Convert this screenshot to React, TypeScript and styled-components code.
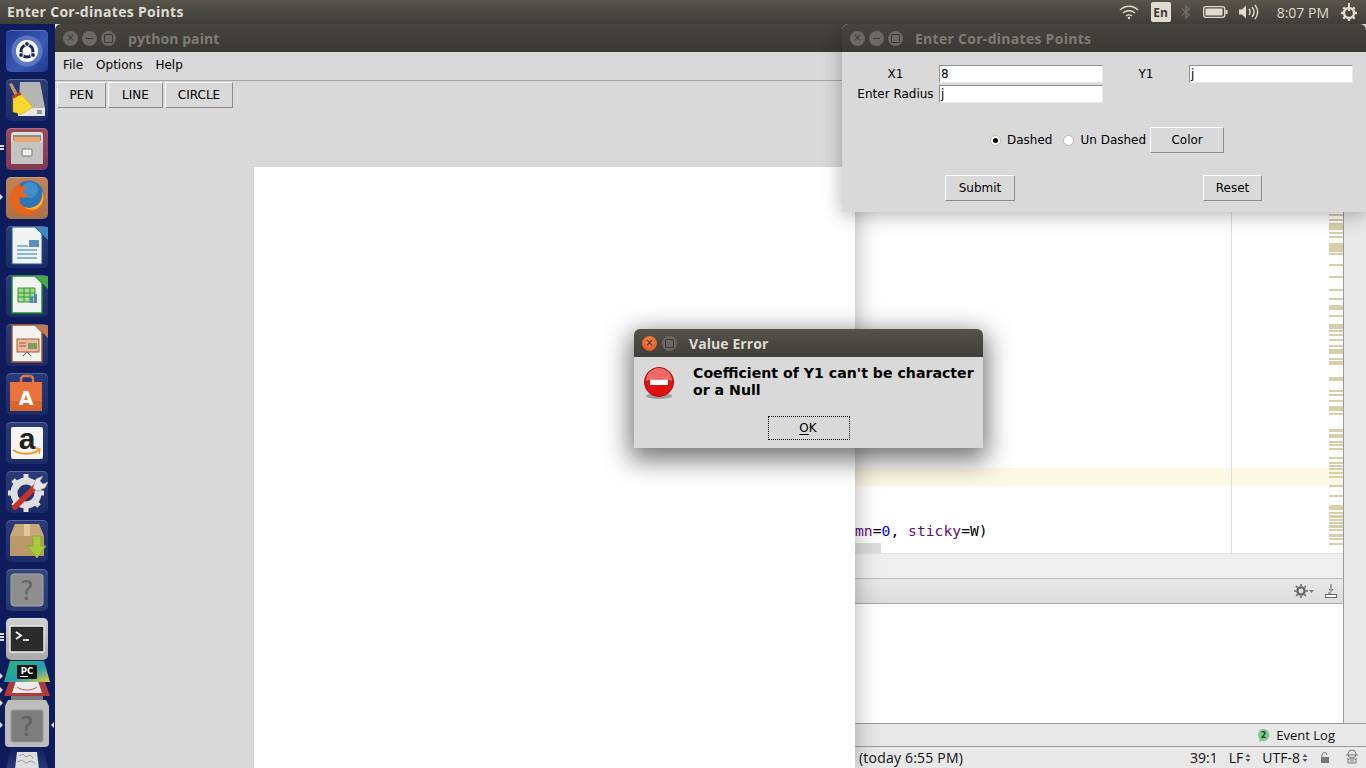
import React from 'react';
import styled, { createGlobalStyle, css } from 'styled-components';

const UI_FONT = '"DejaVu Sans", sans-serif';
const TITLE_FONT = '"Open Sans", "Noto Sans", sans-serif';

const GUTTER_MARKS: [number, number][] = [
  [214, 2], [219, 2], [223, 7], [232, 2], [236, 2], [243, 9], [253, 2], [264, 2], [276, 2], [289, 2],
  [298, 2], [305, 5], [315, 2], [324, 5], [330, 2], [334, 2], [339, 2], [345, 2], [349, 5], [358, 2],
  [361, 4], [377, 4], [390, 2], [394, 2], [400, 2], [406, 5], [413, 2], [429, 3], [434, 4], [441, 2],
  [444, 2], [448, 2], [457, 2], [462, 2], [465, 2], [468, 2], [472, 2], [476, 2], [485, 2], [495, 2],
  [505, 5], [512, 2], [515, 3], [519, 2], [522, 2], [525, 3], [529, 2], [534, 3], [538, 2], [543, 2],
];

const GlobalStyle = createGlobalStyle`
  html, body { margin: 0; padding: 0; overflow: hidden; background: #fff; }
  * { box-sizing: border-box; }
`;

const Desktop = styled.div`
  position: relative;
  width: 1366px;
  height: 768px;
  overflow: hidden;
  font-family: ${UI_FONT};
  background: #fff;
`;

const TopBar = styled.header`
  position: absolute;
  inset: 0 0 auto 0;
  height: 24px;
  z-index: 10;
  display: flex;
  align-items: center;
  padding: 0 8px 0 7px;
  background: linear-gradient(#57554c, #3e3d38);
  color: #dfdbd2;
`;

const TopTitle = styled.span`
  flex: 1;
  margin-top: -1px;
  font: 700 14px ${TITLE_FONT};
  letter-spacing: 0.3px;
`;

const Indicators = styled.div`
  display: flex;
  align-items: center;
`;

const LangBadge = styled.span`
  width: 20px;
  height: 20px;
  margin: 0 10px 0 12px;
  border-radius: 2px;
  background: #dfdbd2;
  color: #3c3b37;
  font: 700 12px ${TITLE_FONT};
  display: flex;
  align-items: center;
  justify-content: center;
`;

const Clock = styled.span`
  margin: 0 11px 0 18px;
  font: 400 14px ${TITLE_FONT};
`;

const Launcher = styled.nav`
  position: absolute;
  left: 0;
  top: 24px;
  bottom: 0;
  width: 55px;
  z-index: 9;
  display: flex;
  flex-direction: column;
  gap: 7px;
  padding: 6px 0 0 6px;
  background: #0e1c5c;
`;

const Tile = styled.div<{ $bg: string }>`
  position: relative;
  flex: none;
  width: 42px;
  height: 42px;
  border-radius: 5px;
  background: ${p => p.$bg};
  box-shadow: inset 0 1px 0 rgba(255, 255, 255, 0.22);
  svg { display: block; }
`;

const Pip = styled.i<{ $top: number }>`
  position: absolute;
  left: -6px;
  top: ${p => p.$top}px;
  border-left: 3px solid #dcdcdc;
  border-top: 3px solid transparent;
  border-bottom: 3px solid transparent;
`;

const Bars = styled.i<{ $count: number }>`
  position: absolute;
  left: -6px;
  top: ${p => 21 - p.$count * 2}px;
  width: 4px;
  height: ${p => p.$count * 3}px;
  background: repeating-linear-gradient(#dcdcdc 0 2px, transparent 2px 3px);
`;

const FoldedStack = styled.svg`
  display: block;
  flex: none;
  margin: -6px 0 0 -6px;
`;

const Window = styled.section<{ $x: number; $y: number; $w: number; $h: number; $z: number }>`
  position: absolute;
  left: ${p => p.$x}px;
  top: ${p => p.$y}px;
  width: ${p => p.$w}px;
  height: ${p => p.$h}px;
  z-index: ${p => p.$z};
  display: flex;
  flex-direction: column;
  background: #d9d9d9;
  border-radius: 6px 6px 0 0;
`;

const PaintWindow = styled(Window)`
  box-shadow: 0 0 26px rgba(0, 0, 0, 0.32);
`;

const CoordWindow = styled(Window)`
  box-shadow: 0 3px 20px rgba(0, 0, 0, 0.3);
`;

const DialogWindow = styled(Window)`
  box-shadow: 0 8px 26px 4px rgba(0, 0, 0, 0.55);
`;

const TitleBar = styled.div<{ $focused?: boolean }>`
  flex: none;
  height: 28px;
  display: flex;
  align-items: center;
  gap: ${p => (p.$focused ? 5 : 4)}px;
  padding-left: 8px;
  border-radius: 6px 6px 0 0;
  background: ${p => (p.$focused ? 'linear-gradient(#55534a, #3f3e39)' : 'linear-gradient(#45443e, #3a3935)')};
`;

const WinDot = styled.span<{ $kind?: 'close' | 'idle' }>`
  width: 15px;
  height: 15px;
  border-radius: 50%;
  display: flex;
  align-items: center;
  justify-content: center;
  color: #3a3935;
  font-size: 10px;
  line-height: 1;
  ${p =>
    p.$kind === 'close'
      ? css`
          background: radial-gradient(circle at 50% 35%, #f58a4e, #dc4a1c);
          color: #41210f;
        `
      : css`
          background: #6a6963;
        `}
`;

const WinMax = styled(WinDot)`
  &::after {
    content: '';
    width: 7px;
    height: 7px;
    border: 1px solid #3a3935;
    border-radius: 1px;
  }
`;

const WinMin = styled(WinDot)`
  &::after {
    content: '';
    width: 7px;
    height: 1px;
    background: #3a3935;
  }
`;

const WinTitle = styled.span<{ $focused?: boolean; $offset: number; $track?: number }>`
  margin-left: ${p => p.$offset}px;
  font: 700 14px ${TITLE_FONT};
  color: ${p => (p.$focused ? '#dfdbd2' : '#7d7c75')};
  letter-spacing: ${p => p.$track ?? 0.08}px;
`;

const MenuBar = styled.div`
  flex: none;
  height: 29px;
  display: flex;
  align-items: center;
  gap: 13px;
  padding: 0 0 2px 8px;
  border-bottom: 1px solid #a3a3a3;
  font-size: 12px;
  color: #000;
`;

const ToolBar = styled.div`
  display: flex;
  gap: 2px;
  padding: 1px 0 0 2px;
`;

const TkButton = styled.button<{ $w: number; $h?: number }>`
  flex: none;
  width: ${p => p.$w}px;
  height: ${p => p.$h ?? 26}px;
  padding: 0;
  background: #d9d9d9;
  border: 1px solid;
  border-color: #fff #8c8c8c #8c8c8c #fff;
  font: 400 12px ${UI_FONT};
  color: #000;
`;

const Canvas = styled.div`
  position: absolute;
  left: 199px;
  top: 143px;
  right: 0;
  bottom: 0;
  background: #fff;
`;

const CoordForm = styled.div`
  display: grid;
  grid-template-columns: 87px 164px 86px 164px;
  grid-auto-rows: 18px;
  row-gap: 2px;
  align-items: center;
  padding: 13px 0 0 10px;
  font-size: 12px;
  color: #000;
`;

const FieldLabel = styled.label`
  text-align: center;
  white-space: nowrap;
`;

const Field = styled.div`
  height: 18px;
  padding: 0 0 2px 1px;
  line-height: 16px;
  background: #fff;
  border: 1px solid;
  border-color: #8f8f8f #e8e8e8 #e8e8e8 #8f8f8f;
  font-size: 12px;
  color: #000;
`;

const RadioRow = styled.div`
  display: flex;
  align-items: center;
  margin: 24px 0 0 148px;
  font-size: 12px;
`;

const RadioDot = styled.span<{ $on?: boolean }>`
  width: 11px;
  height: 11px;
  margin-right: 6px;
  border-radius: 50%;
  background: #fff;
  border: 1px solid #b5b5b5;
  display: flex;
  align-items: center;
  justify-content: center;
  &::after {
    content: '';
    width: 5px;
    height: 5px;
    border-radius: 50%;
    background: ${p => (p.$on ? '#000' : 'transparent')};
  }
`;

const RadioText = styled.span<{ $gap: number }>`
  margin-right: ${p => p.$gap}px;
`;

const SubmitRow = styled.div`
  display: flex;
  margin: 22px 0 0 103px;
  gap: 188px;
`;

const DialogBody = styled.div`
  display: flex;
  gap: 19px;
  padding: 10px 0 0 10px;
`;

const DialogText = styled.p`
  margin: -2px 0 0;
  font: 700 14.15px/17px ${UI_FONT};
  color: #000;
  width: 290px;
`;

const OkButton = styled.button`
  display: block;
  width: 82px;
  height: 24px;
  margin: 17px 0 0 134px;
  padding: 0 2px 0 0;
  background: #d9d9d9;
  border: 1px dotted #000;
  outline: 1px solid #d9d9d9;
  font: 400 12px ${UI_FONT};
  color: #000;
  box-shadow: 1px 1px 0 #8c8c8c;
  u { text-underline-offset: 2px; }
`;

const Ide = styled.div`
  position: absolute;
  left: 855px;
  top: 24px;
  right: 0;
  bottom: 0;
  display: flex;
  flex-direction: column;
  background: #e8e8e8;
  font-family: ${TITLE_FONT};
`;

const IdeMain = styled.div`
  flex: none;
  width: 489px;
  height: 699px;
  display: flex;
  flex-direction: column;
  background: #fff;
  border-right: 1px solid #999;
`;

const EditorArea = styled.div`
  position: relative;
  flex: none;
  height: 530px;
  border-bottom: 1px solid #e0e0e0;
`;

const Margin = styled.div`
  position: absolute;
  left: 376px;
  top: 0;
  bottom: 0;
  width: 1px;
  background: #dedede;
`;

const CaretLine = styled.div`
  position: absolute;
  left: 0;
  right: 0;
  top: 444px;
  height: 18px;
  background: #fdf8e4;
`;

const GutterMark = styled.div`
  position: absolute;
  right: 0;
  width: 14px;
  background: #d8cfa9;
`;

const CodeLine = styled.div`
  position: absolute;
  left: 0;
  top: 498px;
  font: 400 14.7px/18px "DejaVu Sans Mono", monospace;
  color: #000;
  white-space: pre;
`;

const Kw = styled.span<{ $c: string }>`
  color: ${p => p.$c};
`;

const HScrollThumb = styled.div`
  position: absolute;
  left: 0;
  bottom: 0;
  width: 26px;
  height: 10px;
  background: #dcdcdc;
`;

const EmptyStrip = styled.div`
  flex: none;
  height: 25px;
  background: #efefef;
  border-bottom: 1px solid #bdbdbd;
`;

const ToolHeader = styled.div`
  flex: none;
  height: 25px;
  display: flex;
  align-items: center;
  justify-content: flex-end;
  gap: 5px;
  padding-right: 6px;
  background: linear-gradient(#e9e9e9, #dcdcdc);
  border-bottom: 1px solid #a6a6a6;
`;

const ToolOutput = styled.div`
  flex: 1;
  background: #fff;
`;

const EventBar = styled.div`
  flex: none;
  height: 24px;
  display: flex;
  align-items: center;
  justify-content: flex-end;
  gap: 5px;
  padding-right: 31px;
  background: #e8e8e8;
  border-top: 1px solid #9c9c9c;
  border-bottom: 1px solid #9c9c9c;
  font-size: 13px;
  color: #111;
`;

const StatusBar = styled.div`
  flex: 1;
  display: flex;
  align-items: center;
  padding: 0 6px 0 4px;
  background: #e8e8e8;
  font-size: 14px;
  color: #111;
`;

const StatusLeft = styled.span`
  flex: 1;
  letter-spacing: 0.2px;
`;

const StatusItem = styled.span<{ $gap: number }>`
  display: flex;
  align-items: center;
  gap: 2px;
  margin-left: ${p => p.$gap}px;
`;

const Sorter = () => (
  <svg width="6" height="10" viewBox="0 0 6 10">
    <path d="M3 1 5.5 4H.5zM3 9 .5 6h5z" fill="#555" />
  </svg>
);

const QuestionIcon = () => (
  <svg width="42" height="42" viewBox="0 0 42 42">
    <rect x="5" y="5" width="32" height="32" rx="3" fill="#8e8e8e" stroke="#a8a8a8" />
    <text x="21" y="31" textAnchor="middle" fontFamily="DejaVu Sans" fontSize="26" fill="#666">?</text>
  </svg>
);

const launcherIcons: { bg: string; icon: React.ReactNode }[] = [
  {
    bg: 'linear-gradient(135deg, #203a92, #3a5ab4 60%, #1f3a8f)',
    icon: (
      <svg width="42" height="42" viewBox="0 0 42 42">
        <circle cx="21" cy="21" r="15.5" fill="#7f98d4" opacity=".55" />
        <circle cx="21" cy="21" r="11" fill="#fff" />
        <circle cx="21" cy="21" r="6" fill="none" stroke="#16275f" strokeWidth="3" />
        <circle cx="21" cy="14" r="2.4" fill="#16275f" stroke="#fff" />
        <circle cx="15" cy="25" r="2.4" fill="#16275f" stroke="#fff" />
        <circle cx="27" cy="25" r="2.4" fill="#16275f" stroke="#fff" />
      </svg>
    ),
  },
  {
    bg: 'linear-gradient(#2c3d78, #1c2c68)',
    icon: (
      <svg width="42" height="42" viewBox="0 0 42 42">
        <path d="M14 3h20l5 26v8H12z" fill="#b5b5b1" />
        <path d="M12 29h27v8H12z" fill="#e6e6e2" />
        <path d="M31 31h5v4h-5z" fill="#9a9a96" />
        <path d="M3 5l3-1 7 13-3 2z" fill="#c09a62" />
        <path d="M7 18l7-4 13 14-13 8-3-2-4-1z" fill="#f5d92e" stroke="#c9a818" strokeWidth=".6" />
        <path d="M6 17l8-4 1.500 2.500-8 4z" fill="#cc3a20" />
      </svg>
    ),
  },
  {
    bg: 'linear-gradient(#9a4a5c, #7f3a55)',
    icon: (
      <svg width="42" height="42" viewBox="0 0 42 42">
        <path d="M5 7a3 3 0 0 1 3-3h26a3 3 0 0 1 3 3v29H5z" fill="#dcdcd8" />
        <path d="M7 7h28v6H7z" fill="#8d8d88" />
        <path d="M8 9h26v5H8z" fill="#e9a670" />
        <path d="M5 14h32v22H5z" fill="#c4c4c0" />
        <rect x="16" y="21" width="10" height="7" rx="1" fill="#eee" stroke="#777" />
      </svg>
    ),
  },
  {
    bg: 'linear-gradient(#c08458, #aa7048)',
    icon: (
      <svg width="42" height="42" viewBox="0 0 42 42">
        <circle cx="23" cy="18" r="14.500" fill="#2e74b8" />
        <circle cx="24" cy="13" r="8" fill="#4a9ad8" opacity=".7" />
        <path d="M14 6C8 9 4 15 4 22c0 9 8 16 17 16s16-7 17-16c0-3-1-6-2-8 1 6-1 12-6 15-5 3-12 2-15-2-2-3-2-6 0-7 2 1 6 1 7-1-1-2-4-2-5-3 0-3 3-5 4-6-3-1-5-1-6 0-1-1-1-3-1-4z" fill="#e8631c" />
        <path d="M36 14c1 6-1 12-6 15-4 2-8 3-12 1 5 4 13 4 17-2 3-4 3-10 1-14z" fill="#f7b52c" />
      </svg>
    ),
  },
  {
    bg: 'linear-gradient(#2a3b7a, #1c2c68)',
    icon: (
      <svg width="42" height="42" viewBox="0 0 42 42">
        <path d="M6 1h23l7 7v30H6z" fill="#f2f2f0" stroke="#1a5a98" />
        <path d="M29 1l13 13V1z" fill="#3f8ac6" />
        <path d="M11 20h11M11 24h20M11 28h20M11 32h20" stroke="#5fa2d6" strokeWidth="1.6" />
        <rect x="23" y="14" width="10" height="7" fill="#5d8fbb" />
      </svg>
    ),
  },
  {
    bg: 'linear-gradient(#2a3b7a, #1c2c68)',
    icon: (
      <svg width="42" height="42" viewBox="0 0 42 42">
        <path d="M6 1h23l7 7v30H6z" fill="#f2f2f0" stroke="#1d8a2e" strokeWidth="1.4" />
        <path d="M29 1l13 13V1z" fill="#46a84a" />
        <path d="M12 13h17v14H12z" fill="#a7d88d" stroke="#2f9a3c" />
        <path d="M12 18h17M12 22h17M18 13v14M24 13v14" stroke="#2f9a3c" />
        <path d="M24 28v-6h3v6zM28 28v-9h3v9z" fill="#4a86c8" />
      </svg>
    ),
  },
  {
    bg: 'linear-gradient(#2a3b7a, #1c2c68)',
    icon: (
      <svg width="42" height="42" viewBox="0 0 42 42">
        <path d="M6 1h23l7 7v30H6z" fill="#f2f2f0" stroke="#a0522d" strokeWidth="1.4" />
        <path d="M29 1l13 13V1z" fill="#c47a50" />
        <rect x="11" y="15" width="22" height="13" fill="#e8b8a0" stroke="#b2592f" />
        <rect x="22" y="19" width="9" height="6" fill="#7ba05b" />
        <path d="M13 19h7M13 22h7" stroke="#b2592f" />
        <path d="M21 28l-4 4M21 28l4 4" stroke="#555" />
      </svg>
    ),
  },
  {
    bg: 'linear-gradient(#2a3b7a, #1c2c68)',
    icon: (
      <svg width="42" height="42" viewBox="0 0 42 42">
        <path d="M15 10V6a3 3 0 0 1 3-3h6a3 3 0 0 1 3 3v4" fill="none" stroke="#d87a4e" strokeWidth="2.4" />
        <path d="M4 9h32v29H4z" fill="#e9733a" />
        <path d="M4 28h32v10H4z" fill="#d9652e" />
        <text x="20" y="32" textAnchor="middle" fontFamily="DejaVu Sans" fontWeight="700" fontSize="19" fill="#fff">A</text>
      </svg>
    ),
  },
  {
    bg: 'linear-gradient(#2a3b7a, #1c2c68)',
    icon: (
      <svg width="42" height="42" viewBox="0 0 42 42">
        <rect x="5" y="5" width="32" height="32" rx="2" fill="#f4f4f4" />
        <text x="21" y="27" textAnchor="middle" fontFamily="Liberation Sans" fontWeight="700" fontSize="30" fill="#222">a</text>
        <path d="M7 28c8 5 19 5 26 0" fill="none" stroke="#f39a1d" strokeWidth="1.8" />
        <path d="M29 26l5 1-1 5" fill="none" stroke="#f39a1d" strokeWidth="1.4" />
      </svg>
    ),
  },
  {
    bg: 'linear-gradient(#2a3b7a, #1c2c68)',
    icon: (
      <svg width="42" height="42" viewBox="0 0 42 42">
        <circle cx="20" cy="22" r="12" fill="none" stroke="#dedede" strokeWidth="7" />
        <g stroke="#dedede" strokeWidth="5">
          <path d="M20 3v6M20 35v6M2 22h6M32 22h6M7 9l4 4M29 31l4 4M33 9l-4 4M7 35l4-4" />
        </g>
        <path d="M9 36 29 16" stroke="#c8322a" strokeWidth="5.500" strokeLinecap="round" />
        <path d="M27 17l3-9 7-3-3 5 3 3 5-2-3 6-8 3z" fill="#e6e6e6" stroke="#999" strokeWidth=".6" />
      </svg>
    ),
  },
  {
    bg: 'linear-gradient(#2a3b7a, #1c2c68)',
    icon: (
      <svg width="42" height="42" viewBox="0 0 42 42">
        <path d="M9 4h24l5 12v20H4V16z" fill="#c8a878" />
        <path d="M4 16h34v20H4z" fill="#bb986a" />
        <path d="M18 4h6v12h-6z" fill="#e0c79d" />
        <path d="M27 16h8v10h5L31 38l-10-12h6z" fill="#a6cc3e" stroke="#86a82c" />
      </svg>
    ),
  },
  { bg: 'linear-gradient(#34467f, #26386f)', icon: <QuestionIcon /> },
  {
    bg: 'linear-gradient(#d0d0d0, #a9a9a9)',
    icon: (
      <svg width="42" height="42" viewBox="0 0 42 42">
        <rect x="4" y="8" width="34" height="26" rx="1" fill="#2b2b2b" stroke="#efefef" strokeWidth="1.4" />
        <path d="M10 14l5 3.500-5 3.500" fill="none" stroke="#fff" strokeWidth="1.800" />
        <path d="M17 22h6" stroke="#fff" strokeWidth="1.600" />
      </svg>
    ),
  },
];

const pipsFor = (i: number) => {
  if (i === 2) return <Bars $count={2} />;
  if (i === 3) return <Pip $top={17} />;
  if (i === 12) return <Bars $count={3} />;
  return null;
};

export default function App() {
  return (
    <Desktop>
      <GlobalStyle />

      <TopBar>
        <TopTitle>Enter Cor-dinates Points</TopTitle>
        <Indicators>
          <svg width="20" height="16" viewBox="0 0 20 16">
            <g fill="none" stroke="#dfdbd2" strokeWidth="1.400">
              <path d="M1 6c5-5 13-5 18 0" />
              <path d="M4 9c3.500-3 8.500-3 12 0" />
              <path d="M7 12c2-1.500 4-1.500 6 0" />
            </g>
            <circle cx="10" cy="14" r="1.300" fill="#dfdbd2" />
          </svg>
          <LangBadge>En</LangBadge>
          <svg width="10" height="16" viewBox="0 0 10 16" style={{ marginRight: 12 }}>
            <path d="M1 4.500 8 11 5 14V2l3 3-7 6.500" fill="none" stroke="#75736c" strokeWidth="1.200" />
          </svg>
          <svg width="25" height="14" viewBox="0 0 25 14">
            <rect x=".7" y="1.700" width="21" height="10.600" rx="2" fill="none" stroke="#dfdbd2" strokeWidth="1.300" />
            <rect x="2.500" y="3.500" width="17" height="7" fill="#dfdbd2" />
            <rect x="22.500" y="5" width="2" height="4" fill="#dfdbd2" />
          </svg>
          <svg width="20" height="16" viewBox="0 0 20 16" style={{ marginLeft: 11 }}>
            <path d="M0 5.500h3l4-4v13l-4-4H0z" fill="#dfdbd2" />
            <g fill="none" stroke="#dfdbd2" strokeWidth="1.400">
              <path d="M10 5c1.500 2 1.500 4 0 6" />
              <path d="M13 3c2.500 3 2.500 7 0 10" />
              <path d="M16 1c3.500 4 3.500 10 0 14" />
            </g>
          </svg>
          <Clock>8:07 PM</Clock>
          <svg width="18" height="18" viewBox="0 0 18 18">
            <circle cx="9" cy="10" r="5" fill="none" stroke="#dfdbd2" strokeWidth="2.400" />
            <path d="M9 0v8" stroke="#dfdbd2" strokeWidth="2" />
            <g stroke="#dfdbd2" strokeWidth="2.400">
              <path d="M9 15v3M1 10h3M14 10h3M3.300 4.300l2 2M14.700 4.300l-2 2M3.300 15.700l2-2M14.700 15.700l-2-2" />
            </g>
          </svg>
        </Indicators>
      </TopBar>

      <Launcher>
        {launcherIcons.map((item, i) => (
          <Tile key={i} $bg={item.bg}>
            {pipsFor(i)}
            {item.icon}
          </Tile>
        ))}
        <FoldedStack width="55" height="108" viewBox="0 0 55 108">
          <defs>
            <linearGradient id="pcTile" x1="0" y1="0" x2="1" y2="1">
              <stop offset="0" stopColor="#2fb56c" />
              <stop offset=".55" stopColor="#1f9fb0" />
              <stop offset="1" stopColor="#e8cf3a" />
            </linearGradient>
            <linearGradient id="binTile" x1="0" y1="0" x2="0" y2="1">
              <stop offset="0" stopColor="#0e1c5c" />
              <stop offset="1" stopColor="#2a3b7a" />
            </linearGradient>
          </defs>
          <path d="M0 12l3 3-3 3zM0 26l3 3-3 3zM0 39l3 3-3 3zM0 61l3 3-3 3z" fill="#dcdcdc" />
          <path d="M54 61l-3 3 3 3z" fill="#dcdcdc" />
          <path d="M11 34h32v12H11z" fill="#7a7a7a" />
          <path d="M9 21h36l5 14H4z" fill="#b03a3a" />
          <path d="M16 20h22l4 12H12z" fill="#ececec" />
          <path d="M17 26c5 4 15 4 20 0" fill="none" stroke="#c05050" />
          <path d="M10 0h34l6 21H4z" fill="url(#pcTile)" />
          <rect x="17" y="4" width="20" height="14" fill="#111" />
          <text x="27" y="12.500" textAnchor="middle" fontFamily="DejaVu Sans" fontWeight="700" fontSize="8.500" fill="#fff">PC</text>
          <path d="M20 15.500h8" stroke="#fff" />
          <path d="M8 39h38l3 6v37a4 4 0 0 1-4 4H9a4 4 0 0 1-4-4V45z" fill="#bdbdbd" />
          <rect x="11" y="49" width="32" height="32" rx="2" fill="#7d7d7d" stroke="#9a9a9a" />
          <text x="27" y="75" textAnchor="middle" fontFamily="DejaVu Sans" fontSize="26" fill="#5f5f5f">?</text>
          <path d="M11 86h32l5 22H6z" fill="url(#binTile)" />
          <path d="M17 91h20l2 17H15z" fill="#dedede" />
          <path d="M19 95l4-2 3 3 4-2 3 3M17 101l5-2 4 3 5-2 4 2" fill="none" stroke="#9e9e9e" />
        </FoldedStack>
      </Launcher>

      <Ide>
        <IdeMain>
          <EditorArea>
            <CaretLine />
            <Margin />
            {GUTTER_MARKS.map(([y, h]) => (
              <GutterMark key={y} style={{ top: y - 24, height: h }} />
            ))}
            <CodeLine>
              <Kw $c="#660e7a">mn</Kw>=<Kw $c="#0000ff">0</Kw>, <Kw $c="#660e7a">sticky</Kw>=W)
            </CodeLine>
            <HScrollThumb />
          </EditorArea>
          <EmptyStrip />
          <ToolHeader>
            <svg width="20" height="14" viewBox="0 0 20 14">
              <circle cx="7" cy="7" r="3.600" fill="none" stroke="#666" strokeWidth="2.400" />
              <path d="M7 0v14M0 7h14M2 2l10 10M12 2 2 12" stroke="#666" strokeWidth="1.600" strokeDasharray="2 10" />
              <path d="M15 6h5l-2.500 3z" fill="#777" />
            </svg>
            <svg width="12" height="14" viewBox="0 0 12 14" style={{ marginLeft: 6 }}>
              <path d="M6 0v6M4 5l2 2.500L8 5" fill="none" stroke="#666" />
              <path d="M3 9h3" stroke="#666" />
              <rect x=".5" y="10.500" width="11" height="3" fill="#fff" stroke="#666" />
            </svg>
          </ToolHeader>
          <ToolOutput />
        </IdeMain>
        <EventBar>
          <svg width="15" height="15" viewBox="0 0 15 15">
            <path d="M7.500 1a6 6 0 1 1-2 11.700L3 14l.6-3A6 6 0 0 1 7.500 1z" fill="#7fc98a" />
            <text x="7.500" y="10" textAnchor="middle" fontFamily="DejaVu Sans" fontWeight="700" fontSize="8" fill="#1f4d28">2</text>
          </svg>
          Event Log
        </EventBar>
        <StatusBar>
          <StatusLeft>(today 6:55 PM)</StatusLeft>
          <StatusItem $gap={0}>39:1</StatusItem>
          <StatusItem $gap={11}>LF<Sorter /></StatusItem>
          <StatusItem $gap={11}>UTF-8<Sorter /></StatusItem>
          <StatusItem $gap={12}>
            <svg width="10" height="12" viewBox="0 0 10 12">
              <path d="M2 5V3a2.500 2.500 0 0 1 5 0" fill="none" stroke="#777" />
              <rect x="1" y="5" width="8" height="6" fill="#777" />
            </svg>
          </StatusItem>
          <StatusItem $gap={14}>
            <svg width="16" height="17" viewBox="0 0 16 17">
              <circle cx="8" cy="5" r="4" fill="none" stroke="#777" />
              <path d="M2 6h12M3 10h10M4 10v4h8v-4M6 12h4" fill="none" stroke="#777" />
            </svg>
          </StatusItem>
        </StatusBar>
      </Ide>

      <PaintWindow $x={55} $y={24} $w={800} $h={744} $z={2}>
        <TitleBar>
          <WinDot>×</WinDot>
          <WinMin />
          <WinMax />
          <WinTitle $offset={8}>python paint</WinTitle>
        </TitleBar>
        <MenuBar>
          <span>File</span>
          <span>Options</span>
          <span>Help</span>
        </MenuBar>
        <ToolBar>
          <TkButton $w={49}>PEN</TkButton>
          <TkButton $w={55}>LINE</TkButton>
          <TkButton $w={68}>CIRCLE</TkButton>
        </ToolBar>
        <Canvas />
      </PaintWindow>

      <CoordWindow $x={842} $y={24} $w={524} $h={188} $z={3}>
        <TitleBar>
          <WinDot>×</WinDot>
          <WinMin />
          <WinMax />
          <WinTitle $offset={8} $track={0.28}>Enter Cor-dinates Points</WinTitle>
        </TitleBar>
        <CoordForm>
          <FieldLabel>X1</FieldLabel>
          <Field>8</Field>
          <FieldLabel>Y1</FieldLabel>
          <Field>j</Field>
          <FieldLabel>Enter Radius</FieldLabel>
          <Field>j</Field>
        </CoordForm>
        <RadioRow>
          <RadioDot $on />
          <RadioText $gap={11}>Dashed</RadioText>
          <RadioDot />
          <RadioText $gap={4}>Un Dashed</RadioText>
          <TkButton $w={74}>Color</TkButton>
        </RadioRow>
        <SubmitRow>
          <TkButton $w={70}>Submit</TkButton>
          <TkButton $w={59}>Reset</TkButton>
        </SubmitRow>
      </CoordWindow>

      <DialogWindow $x={634} $y={329} $w={349} $h={119} $z={4}>
        <TitleBar $focused>
          <WinDot $kind="close">×</WinDot>
          <WinMax />
          <WinTitle $focused $offset={7}>Value Error</WinTitle>
        </TitleBar>
        <DialogBody>
          <svg width="30" height="32" viewBox="0 0 30 32">
            <ellipse cx="15" cy="29" rx="13" ry="3" fill="#777" opacity=".6" />
            <circle cx="15" cy="15" r="14.500" fill="#e01010" stroke="#a80a0a" />
            <path d="M2 14a13 13 0 0 1 26 0c-6-3-20-3-26 0z" fill="#f06a6a" />
            <rect x="6" y="12.500" width="18" height="5.500" fill="#fff" />
          </svg>
          <DialogText>Coefficient of Y1 can't be character or a Null</DialogText>
        </DialogBody>
        <OkButton><u>O</u>K</OkButton>
      </DialogWindow>
    </Desktop>
  );
}
